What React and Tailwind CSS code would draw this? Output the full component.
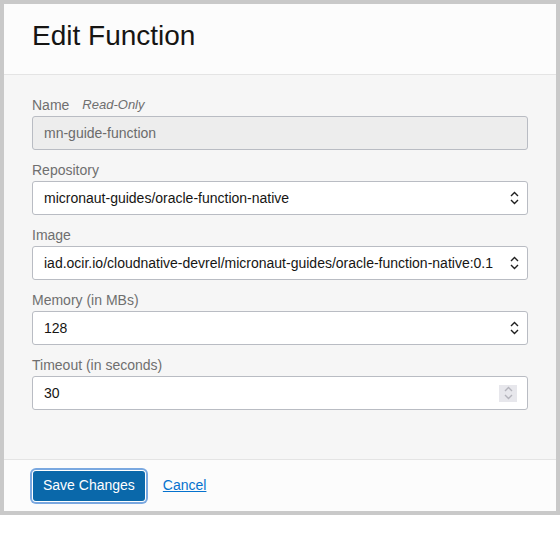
import React from 'react';

const font = { fontFamily: '"Liberation Sans", Arial, sans-serif' };

// Up/down chevrons shown on select boxes
const SelectArrows = ({ muted }) => (
  <svg width="9" height="16" viewBox="0 0 9 16" fill="none" className="shrink-0">
    <path d="M1 6 L4.5 2.5 L8 6" stroke={muted ? '#b4b4bc' : '#1f1f1f'} strokeWidth="1.4" />
    <path d="M1 10 L4.5 13.5 L8 10" stroke={muted ? '#b4b4bc' : '#1f1f1f'} strokeWidth="1.4" />
  </svg>
);

const Field = ({ label, extra, children, last }) => (
  <div className={last ? '' : 'mb-[10px]'}>
    <div className="h-[20px] mb-[1px] flex items-center text-[14px] leading-[20px] text-[#6f6f6f]">
      <span>{label}</span>
      {extra && <span className="ml-[13px] text-[13px] italic text-[#6f6f6f]">{extra}</span>}
    </div>
    {children}
  </div>
);

const SelectBox = ({ value }) => (
  <div className="h-[34px] flex items-center justify-between bg-white border border-[#b9bcc3] rounded-[3px] pl-[11px] pr-[8px] text-[14px] text-[#161513]">
    <span className="truncate">{value}</span>
    <SelectArrows />
  </div>
);

const App = () => {
  const fields = [
    { label: 'Repository', value: 'micronaut-guides/oracle-function-native' },
    { label: 'Image', value: 'iad.ocir.io/cloudnative-devrel/micronaut-guides/oracle-function-native:0.1' },
    { label: 'Memory (in MBs)', value: '128' },
  ];

  return (
    <div className="w-[560px] bg-white" style={font}>
      <div className="border-4 border-[#c9c9c9]">
        {/* Header */}
        <div className="h-[71px] bg-[#fcfcfc] border-b border-[#e4e4e4] px-[28px] pt-[14px]">
          <h1 className="text-[28px] leading-[36px] text-[#161513]">Edit Function</h1>
        </div>

        {/* Body */}
        <div className="bg-[#f6f6f6] px-[28px] pt-[20px] pb-[49px]">
          <Field label="Name" extra="Read-Only">
            <div className="h-[34px] flex items-center bg-[#ededed] border border-[#b9bcc3] rounded-[3px] px-[11px] text-[14px] text-[#6b6b6b]">
              mn-guide-function
            </div>
          </Field>

          {fields.map((f) => (
            <Field key={f.label} label={f.label}>
              <SelectBox value={f.value} />
            </Field>
          ))}

          <Field label="Timeout (in seconds)" last>
            <div className="h-[34px] flex items-center justify-between bg-white border border-[#b9bcc3] rounded-[3px] pl-[11px] pr-[10px] text-[14px] text-[#161513]">
              <span>30</span>
              <div className="w-[18px] h-[17px] bg-[#e7e7ec] flex items-center justify-center">
                <SelectArrows muted />
              </div>
            </div>
          </Field>
        </div>

        {/* Footer */}
        <div className="h-[52px] bg-[#fcfcfc] border-t border-[#e4e4e4] px-[29px] flex items-center gap-[16px]">
          <button
            type="button"
            className="h-[30px] px-[10px] bg-[#0a68aa] text-white text-[14px] rounded-[3px] shadow-[0_0_0_1px_#ffffff,0_0_0_3px_#7aa8e0]"
          >
            Save Changes
          </button>
          <a href="#" className="ml-[2px] text-[14px] text-[#0572ce] underline">
            Cancel
          </a>
        </div>
      </div>
    </div>
  );
};

export default App;
